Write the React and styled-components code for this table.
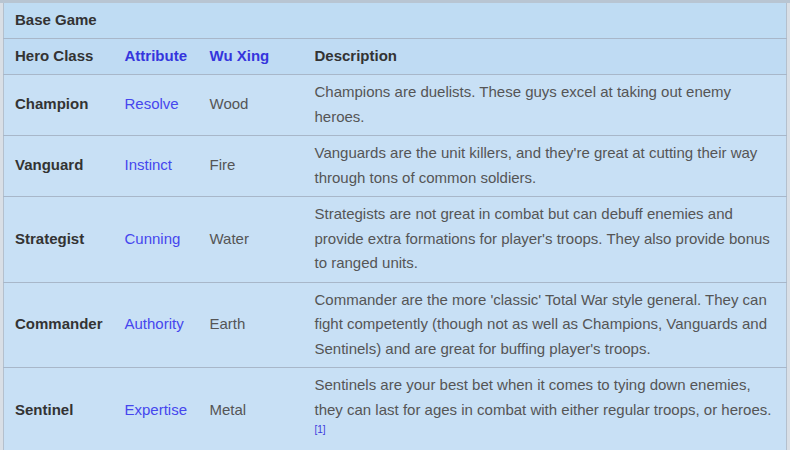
import React from "react";
import styled, { createGlobalStyle } from "styled-components";

const Global = createGlobalStyle`
  html, body { margin: 0; padding: 0; }
  body {
    width: 790px;
    height: 450px;
    overflow: hidden;
    background: linear-gradient(to bottom, #b8c5d2 0 3px, #d9dfe6 3px);
    font-family: "Liberation Sans", Arial, sans-serif;
  }
`;

const Page = styled.div`
  padding: 3px 3px 0 3px;
`;

const Table = styled.table`
  width: 784px;
  border-collapse: collapse;
  table-layout: fixed;
  background: #c8e0f5;
  border-left: 1px solid #b4c0cd;
  border-right: 1px solid #b4c0cd;
  font-size: 15px;
  line-height: 24.5px;
  color: #545454;
`;

const CaptionRow = styled.tr`
  background: #bfdcf3;
  border-bottom: 1px solid #a8b7c9;
`;

const HeadRow = styled.tr`
  background: #bfdbf3;
  border-bottom: 1px solid #a8b7c9;
`;

const BodyRow = styled.tr`
  border-bottom: 1px solid #a8b7c9;
`;

const CaptionCell = styled.th`
  text-align: left;
  font-weight: bold;
  padding: 5px 10px 5px 11px;
  color: #333;
  vertical-align: middle;
`;

const Th = styled.th`
  text-align: left;
  font-weight: bold;
  padding: 5px 10px 6px ${(p) => (p.$desc ? "10px" : "11px")};
  color: ${(p) => (p.$link ? "#3535dd" : "#333")};
  vertical-align: middle;
`;

const Td = styled.td`
  padding: 5px 10px 6px 11px;
  vertical-align: middle;
  font-weight: ${(p) => (p.$bold ? "bold" : "normal")};
  color: ${(p) => (p.$bold ? "#333" : p.$link ? "#4646ee" : "#555")};
`;

const DescTd = styled.td`
  padding: 5px 12px 6px 10px;
  vertical-align: middle;
  color: #555;
`;

const Ref = styled.sup`
  font-size: 10px;
  line-height: 1;
  color: #3b3bdd;
`;

const rows = [
  {
    cls: "Champion",
    attr: "Resolve",
    wx: "Wood",
    desc: "Champions are duelists. These guys excel at taking out enemy heroes.",
  },
  {
    cls: "Vanguard",
    attr: "Instinct",
    wx: "Fire",
    desc: "Vanguards are the unit killers, and they're great at cutting their way through tons of common soldiers.",
  },
  {
    cls: "Strategist",
    attr: "Cunning",
    wx: "Water",
    desc: "Strategists are not great in combat but can debuff enemies and provide extra formations for player's troops. They also provide bonus to ranged units.",
  },
  {
    cls: "Commander",
    attr: "Authority",
    wx: "Earth",
    desc: "Commander are the more 'classic' Total War style general. They can fight competently (though not as well as Champions, Vanguards and Sentinels) and are great for buffing player's troops.",
  },
  {
    cls: "Sentinel",
    attr: "Expertise",
    wx: "Metal",
    desc: "Sentinels are your best bet when it comes to tying down enemies, they can last for ages in combat with either regular troops, or heroes.",
    ref: true,
  },
];

export default function App() {
  return (
    <>
      <Global />
      <Page>
        <Table>
          <colgroup>
            <col style={{ width: 110 }} />
            <col style={{ width: 85 }} />
            <col style={{ width: 106 }} />
            <col />
          </colgroup>
          <thead>
            <CaptionRow>
              <CaptionCell colSpan={4}>Base Game</CaptionCell>
            </CaptionRow>
            <HeadRow>
              <Th>Hero Class</Th>
              <Th $link>Attribute</Th>
              <Th $link>Wu Xing</Th>
              <Th $desc>Description</Th>
            </HeadRow>
          </thead>
          <tbody>
            {rows.map((r) => (
              <BodyRow key={r.cls}>
                <Td $bold>{r.cls}</Td>
                <Td $link>{r.attr}</Td>
                <Td>{r.wx}</Td>
                <DescTd>
                  {r.desc}
                  {r.ref && <Ref>[1]</Ref>}
                </DescTd>
              </BodyRow>
            ))}
          </tbody>
        </Table>
      </Page>
    </>
  );
}
